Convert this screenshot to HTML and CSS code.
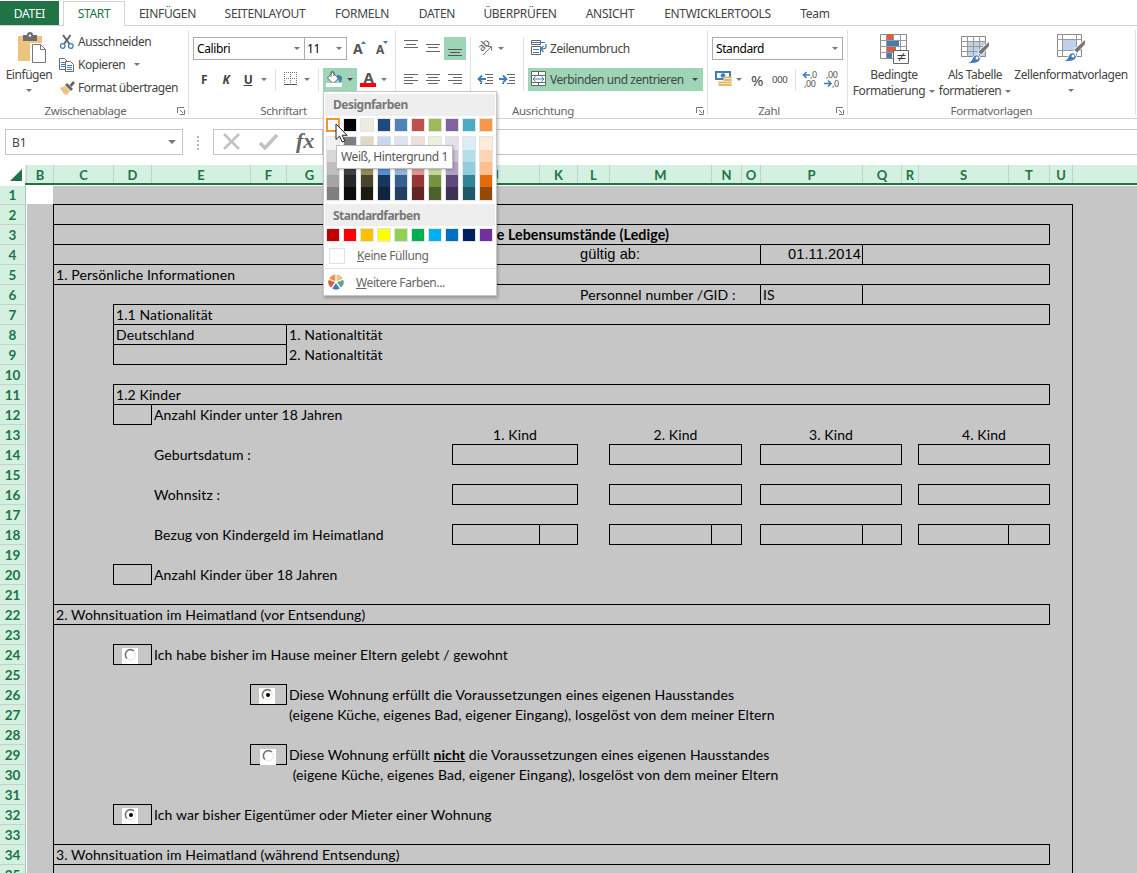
FILE: index.html
```html
<!DOCTYPE html>
<html lang="de">
	<head>
		<meta charset="UTF-8">
		<meta name="viewport" content="width=device-width, initial-scale=1.0">
		<title>Excel</title>
		<link rel="stylesheet" href="styles.css">
	</head>
	<body>
		<nav class="tabs">
			<a class="tab file">DATEI</a>
			<a class="tab active">START</a>
			<a class="tab t-einf">EINFÜGEN</a>
			<a class="tab t-layout">SEITENLAYOUT</a>
			<a class="tab t-formeln">FORMELN</a>
			<a class="tab t-daten">DATEN</a>
			<a class="tab t-pruef">ÜBERPRÜFEN</a>
			<a class="tab t-ansicht">ANSICHT</a>
			<a class="tab t-dev">ENTWICKLERTOOLS</a>
			<a class="tab t-team">Team</a>
		</nav>

		<div class="ribbon">
			<section class="group g-clip">
				<div class="tools clip">
					<div class="big paste">
						<svg width="30" height="32" viewBox="0 0 30 32">
							<path d="M1 3h24v25H1z" fill="#ecc47f"/>
							<path d="M6 2h4a3 3 0 0 1 6 0h4v6H6z" fill="#6d6d6d"/>
							<circle cx="13" cy="2.6" r="1.2" fill="#fff"/>
							<path d="M14.500 11.500h9l5 5v13h-14z" fill="#fff" stroke="#fff" stroke-width="3"/>
							<path d="M15.500 11.500h8l5 5v13h-13zM23.500 11.500v5h5" fill="#fff" stroke="#777"/>
						</svg>
						<span class="lbl">Einfügen</span>
						<i class="arr"></i>
					</div>
					<div class="small-list">
						<div class="small">
							<svg width="16" height="16" viewBox="0 0 16 16">
								<path d="M4 1l6.500 9M11.500 1L5 10" stroke="#666" stroke-width="2" fill="none"/>
								<circle cx="3.700" cy="12" r="2.300" fill="none" stroke="#3f7cb8" stroke-width="1.300"/>
								<circle cx="11.800" cy="12" r="2.300" fill="none" stroke="#3f7cb8" stroke-width="1.300"/>
							</svg>
							<span>Ausschneiden</span>
						</div>
						<div class="small s-copy">
							<svg width="16" height="16" viewBox="0 0 16 16">
								<path d="M.5 1.500h5l3 3v8h-8z" fill="#fff" stroke="#6a6a6a"/>
								<path d="M2 5.500h4M2 7.500h4M2 9.500h4" stroke="#3f7cb8"/>
								<path d="M6.500 4.500h5l3 3v7h-8z" fill="#fff" stroke="#6a6a6a"/>
								<path d="M8 8.500h5M8 10.500h5M8 12.500h5" stroke="#3f7cb8"/>
							</svg>
							<span>Kopieren</span>
							<i class="arr"></i>
						</div>
						<div class="small s-format">
							<svg width="16" height="16" viewBox="0 0 16 16">
								<path d="M1 8l5-2 5 5-3 4-3-1z" fill="#ecc47f"/>
								<path d="M6 5l2-2 6 6-2 2z" fill="#666"/>
								<path d="M10.500 5l3.500-4 2 2-3.500 4z" fill="#666"/>
							</svg>
							<span>Format übertragen</span>
						</div>
					</div>
				</div>
				<div class="caption">Zwischenablage<svg class="launch" width="8" height="8" viewBox="0 0 8 8"><path d="M.5 6V.5H7M3 3l3 3M7.500 3v4.500H3" fill="none" stroke="#777"/></svg></div>
			</section>

			<section class="group g-font">
				<div class="tools rows">
					<div class="row">
						<div class="combo c-font">Calibri<i class="arr"></i></div>
						<div class="combo c-size">11<i class="arr"></i></div>
						<svg class="grow" width="44" height="23" viewBox="0 0 44 23">
							<text class="bold-a" x="6" y="17" font-size="14">A</text>
							<path d="M14 7l2.500-3 2.500 3z" fill="#3f7cb8"/>
							<text class="bold-a" x="29" y="17" font-size="12">A</text>
							<path d="M36 4h5l-2.500 3z" fill="#3f7cb8"/>
						</svg>
					</div>
					<div class="row">
						<b class="fmt">F</b>
						<b class="fmt it">K</b>
						<b class="fmt un">U</b>
						<i class="arr slot"></i>
						<i class="sep"></i>
						<svg width="26" height="23" viewBox="0 0 26 23">
							<path d="M8.500 4v12M14.500 4v12M20.500 4v12M8 4.500h13M8 10.500h13" stroke="#777" stroke-dasharray="1 1"/>
							<path d="M8 16.500h13" stroke="#555"/>
						</svg>
						<i class="arr slot"></i>
						<i class="sep"></i>
						<div class="fill-btn">
							<svg width="22" height="23" viewBox="0 0 22 23">
								<path d="M9.500 4.500l6 6-5.500 5-5.500-5.500z" fill="#fff" stroke="#666"/>
								<path d="M8 9V4q1.500-2 3 0v4" fill="none" stroke="#666"/>
								<path d="M14 7q5 0 5 3t-2 5q-1-4-3-5z" fill="#3f7cb8"/>
								<path d="M3 15h16v4H3z" fill="#fff"/>
							</svg>
							<i class="arr dark"></i>
						</div>
						<svg width="22" height="23" viewBox="0 0 22 23">
							<text class="bold-a" x="6.500" y="15" font-size="15">A</text>
							<path d="M3 15h16v4H3z" fill="#f00"/>
						</svg>
						<i class="arr slot"></i>
					</div>
				</div>
				<div class="caption">Schriftart</div>
			</section>

			<section class="group g-align">
				<div class="tools split">
					<div class="rows">
						<div class="row">
							<svg width="22" height="23" viewBox="0 0 22 23"><path d="M4 3.500h14M6 7.500h10M4 10.500h14" stroke="#666"/></svg>
							<svg width="22" height="23" viewBox="0 0 22 23"><path d="M4 7.500h14M6 10.500h10M4 14.500h14" stroke="#666"/></svg>
							<svg class="on" width="22" height="23" viewBox="0 0 22 23"><path d="M4 12.500h14M6 15.500h10M4 18.500h14" stroke="#555"/></svg>
						</div>
						<div class="row">
							<svg width="22" height="23" viewBox="0 0 22 23"><path d="M4 6.500h14M4 9.500h9M4 12.500h14M4 15.500h9" stroke="#666"/></svg>
							<svg width="22" height="23" viewBox="0 0 22 23"><path d="M4 6.500h14M6 9.500h10M4 12.500h14M6 15.500h10" stroke="#666"/></svg>
							<svg width="22" height="23" viewBox="0 0 22 23"><path d="M4 6.500h14M9 9.500h9M4 12.500h14M9 15.500h9" stroke="#666"/></svg>
						</div>
					</div>
					<i class="vline"></i>
					<div class="rows orient">
						<div class="row">
							<svg width="22" height="23" viewBox="0 0 22 23">
								<text x="0" y="0" transform="translate(8,15) rotate(-45)" font-size="11" class="ab">ab</text>
								<path d="M9 18l8-8M13.500 9.500h4v4" fill="none" stroke="#777"/>
							</svg>
							<i class="arr slot"></i>
						</div>
						<div class="row">
							<svg width="44" height="23" viewBox="1 0 44 23">
								<path d="M12 6.500h8M14 9.500h6M14 12.500h6M12 15.500h8M7 15.500h2" stroke="#666"/>
								<path d="M13 11H6M9 7.500L5.500 11 9 14.500" fill="none" stroke="#3f7cb8" stroke-width="1.800"/>
								<path d="M34 6.500h8M36 9.500h6M36 12.500h6M34 15.500h8M29 15.500h2" stroke="#666"/>
								<path d="M26 11h7M30 7.500l3.500 3.500L30 14.500" fill="none" stroke="#3f7cb8" stroke-width="1.800"/>
							</svg>
						</div>
					</div>
					<i class="vline v2"></i>
					<div class="rows">
						<div class="row wrap-btn">
							<svg width="22" height="23" viewBox="0 0 22 23">
								<path d="M3.500 3.500h9v4h-9zM3.500 9.500h9v8h-9z" fill="#fff" stroke="#666"/>
								<path d="M3 5.500h14M5 12.500h6M5 15.500h6" stroke="#3f7cb8"/>
								<path d="M18 7v3q0 2-5 2M15.500 9L12.500 12l3 3" fill="none" stroke="#3f7cb8" stroke-width="1.300"/>
							</svg>
							<span>Zeilenumbruch</span>
						</div>
						<div class="row merge-btn">
							<svg width="22" height="23" viewBox="0 0 22 23">
								<path d="M3.500 3.500h14v14h-14z" fill="#fff" stroke="#666"/>
								<path d="M3 7.500h15M3 14.500h15M10.500 4v3M10.500 15v3" stroke="#666"/>
								<path d="M5 11h11M7.500 8.500L5 11l2.500 2.500M13.500 8.500L16 11l-2.500 2.500" fill="none" stroke="#3f7cb8"/>
							</svg>
							<span>Verbinden und zentrieren</span>
							<i class="arr dark"></i>
						</div>
					</div>
				</div>
				<div class="caption">Ausrichtung<svg class="launch" width="8" height="8" viewBox="0 0 8 8"><path d="M.5 6V.5H7M3 3l3 3M7.500 3v4.500H3" fill="none" stroke="#777"/></svg></div>
			</section>

			<section class="group g-num">
				<div class="tools rows">
					<div class="row"><div class="combo c-num">Standard<i class="arr"></i></div></div>
					<div class="row">
						<svg width="22" height="23" viewBox="0 0 22 23">
							<path d="M4 4h14v7H4z" fill="#fff" stroke="#3f7cb8" stroke-width="2"/>
							<circle cx="11" cy="7.500" r="2.300" fill="#3f7cb8"/>
							<ellipse cx="15.500" cy="11.500" rx="4" ry="3" fill="#fff"/>
							<path d="M12 9.500h7M12 12h7M12 14.500h7M7 14.500h6M7 17h6M12 17h7" stroke="#e9b866" stroke-width="1.800" stroke-linecap="round"/>
						</svg>
						<i class="arr slot"></i>
						<span class="pct">%</span>
						<span class="ths">000</span>
						<i class="sep"></i>
						<svg width="48" height="23" viewBox="0 0 48 23">
							<text class="dec" x="14" y="10">,0</text>
							<text class="dec" x="8" y="19">,00</text>
							<path d="M14 7H8M10.500 4L7.500 7l3 3" fill="none" stroke="#3f7cb8" stroke-width="1.600"/>
							<text class="dec" x="30" y="10">,00</text>
							<text class="dec" x="36" y="19">,0</text>
							<path d="M28 15.500h7M32 12.500l3 3-3 3" fill="none" stroke="#3f7cb8" stroke-width="1.600"/>
						</svg>
					</div>
				</div>
				<div class="caption">Zahl<svg class="launch" width="8" height="8" viewBox="0 0 8 8"><path d="M.5 6V.5H7M3 3l3 3M7.500 3v4.500H3" fill="none" stroke="#777"/></svg></div>
			</section>

			<section class="group g-style">
				<div class="tools styles">
					<div class="big b-cond">
						<svg width="30" height="32" viewBox="0 0 30 32">
							<path d="M1.500 1.500h26v24h-26z" fill="#fff" stroke="#888"/>
							<path d="M8 1h6v6H8zM8 13h9v6H8z" fill="#d9603f"/>
							<path d="M8 7h12v6H8zM8 19h5v6H8z" fill="#3f7cb8"/>
							<path d="M1 7.500h27M1 13.500h27M1 19.500h27M7.500 1v25M14.500 1v6M21.500 1v25" stroke="#999"/>
							<path d="M14.500 17.500h15v13h-15z" fill="#fff" stroke="#666"/>
							<path d="M18.500 22.500h8M18.500 25.500h8M25 20l-5 8" stroke="#333"/>
						</svg>
						<span class="lbl">Bedingte</span>
						<span class="lbl">Formatierung<i class="arr"></i></span>
					</div>
					<div class="big b-table">
						<svg width="30" height="32" viewBox="0 0 30 32">
							<path d="M1.500 3.500h24v20h-24z" fill="#fff" stroke="#888"/>
							<path d="M7 9h18v14H7z" fill="#bdd3ec"/>
							<path d="M1 8.500h25M1 13.500h25M1 18.500h25M7.500 3v21M13.500 3v21M19.500 3v21" stroke="#999"/>
							<path d="M29.500 8v5l-8 9-4-3z" fill="#777" stroke="#fff"/>
							<path d="M7 30q5-1 6-6 3-4 6-1 3 3 0 5.500-4 3-12 1.500z" fill="#3f7cb8" stroke="#fff"/>
							<circle cx="17" cy="25" r="1.500" fill="#fff"/>
						</svg>
						<span class="lbl">Als Tabelle</span>
						<span class="lbl">formatieren<i class="arr"></i></span>
					</div>
					<div class="big b-cell">
						<svg width="30" height="32" viewBox="0 0 30 32">
							<path d="M1.500 1.500h24v22h-24z" fill="#fff" stroke="#888"/>
							<path d="M6 7h15v11H6z" fill="#bdd3ec"/>
							<path d="M1 6.500h25M1 17.500h25M6.500 1v23M20.500 1v23" stroke="#999"/>
							<path d="M29.500 6v5l-8 9-4-3z" fill="#777" stroke="#fff"/>
							<path d="M7 28q5-1 6-6 3-4 6-1 3 3 0 5.500-4 3-12 1.500z" fill="#3f7cb8" stroke="#fff"/>
							<circle cx="17" cy="23" r="1.500" fill="#fff"/>
						</svg>
						<span class="lbl">Zellenformatvorlagen</span>
						<i class="arr"></i>
					</div>
				</div>
				<div class="caption">Formatvorlagen</div>
			</section>
		</div>

		<div class="formula-bar">
			<div class="name-box">B1<i class="arr"></i></div>
			<div class="dots"><i></i><i></i><i></i><i></i></div>
			<div class="fx-box">
				<svg width="108" height="24" viewBox="0 0 108 24">
					<path d="M10 4l15 15M25 4L10 19" stroke="#c2c2c2" stroke-width="2.600" fill="none"/>
					<path d="M46 13l5 5L63 5" stroke="#c2c2c2" stroke-width="3.500" fill="none"/>
					<text class="fx" x="82" y="18">fx</text>
				</svg>
			</div>
			<div class="formula"></div>
		</div>

		<div class="sheet">
			<div class="col-heads" id="colHeads"></div>
			<div class="sheet-body">
				<div class="row-heads" id="rowHeads"></div>
				<div class="cells" id="cells"></div>
			</div>
		</div>

		<div class="color-menu">
			<div class="menu-title">Designfarben</div>
			<div class="swatches" id="themeColors"></div>
			<div class="swatches shades" id="shades"></div>
			<div class="menu-title second">Standardfarben</div>
			<div class="swatches std" id="stdColors"></div>
			<div class="menu-item"><i class="no-fill"></i><span><u>K</u>eine Füllung</span></div>
			<div class="menu-item more">
				<svg width="16" height="16" viewBox="-8 -8 16 16">
					<path d="M0 0L-6.800-3A7.500 7.500 0 0 1 0-7.500z" fill="#e8954e"/>
					<path d="M0 0V-7.500A7.500 7.500 0 0 1 7-3z" fill="#ecc47f"/>
					<path d="M0 0L7-3A7.500 7.500 0 0 1 4.500 6z" fill="#62a58c"/>
					<path d="M0 0L4.500 6A7.500 7.500 0 0 1-4.500 6z" fill="#3f7cb8"/>
					<path d="M0 0L-4.500 6A7.500 7.500 0 0 1-7-3z" fill="#d9603f"/>
					<path d="M0 0V-8M0 0L8-3M0 0L5 7M0 0L-5 7M0 0L-8-3" stroke="#fff" stroke-width="1.300"/>
				</svg>
				<span><u>W</u>eitere Farben...</span>
			</div>
		</div>
		<div class="tooltip">Weiß, Hintergrund 1</div>
		<svg class="cursor" width="14" height="21" viewBox="0 0 14 21">
			<path d="M1 1v15.500l3.600-3.400 2.600 6 2.600-1.200-2.600-5.600h4.900z" fill="#fff" stroke="#222"/>
		</svg>

		<script src="script.js"></script>
	</body>
</html>
```
FILE: styles.css
```css
* {
    box-sizing: border-box;
}

body {
    margin: 0;
    width: 1137px;
    height: 873px;
    overflow: hidden;
    position: relative;
    background-color: #ffffff;
    color: #444444;
    font-family: "Noto Sans", "Open Sans", sans-serif;
    font-size: 12px;
}

svg {
    display: block;
    flex: none;
    overflow: visible;
}

/* small drop down triangle */
.arr {
    display: inline-block;
    flex: none;
    width: 0;
    height: 0;
    border: 3px solid transparent;
    border-top-color: #777777;
    border-bottom: 0;
}

.arr.slot {
    margin: 0 2px;
}

.arr.dark {
    border-top-color: #444444;
}

/* tabs */
.tabs {
    display: flex;
    height: 26px;
    padding-top: 1px;
    border-bottom: 1px solid #d4d4d4;
}

.tab {
    height: 25px;
    line-height: 25px;
    text-align: center;
    white-space: nowrap;
    letter-spacing: -0.3px;
}

.tab.file {
    width: 59px;
    height: 24px;
    margin-right: 4px;
    background-color: #217346;
    color: #ffffff;
}

.tab.active {
    width: 62px;
    border: 1px solid #d4d4d4;
    border-bottom: 0;
    background-color: #ffffff;
    color: #217346;
    line-height: 24px;
}

.t-einf { width: 85px; }
.t-layout { width: 110px; }
.t-formeln { width: 84px; }
.t-daten { width: 66px; }
.t-pruef { width: 100px; }
.t-ansicht { width: 80px; }
.t-dev { width: 135px; }
.t-team { width: 60px; }

/* ribbon */
.ribbon {
    display: flex;
    height: 93px;
    border-bottom: 1px solid #d4d4d4;
    letter-spacing: -0.45px;
}

.group {
    display: flex;
    flex-direction: column;
    margin: 4px 0 3px;
    border-right: 1px solid #e1e1e1;
}

.g-clip { width: 189px; }
.g-font { width: 207px; }
.g-align { width: 312px; }
.g-num { width: 140px; }
.g-style { width: 288px; }

.tools {
    height: 73px;
}

.caption {
    position: relative;
    height: 12px;
    line-height: 15px;
    padding-right: 17px;
    text-align: center;
    color: #666666;
    font-size: 11.5px;
    letter-spacing: -0.35px;
}

.g-style .caption {
    padding-right: 0;
}

.launch {
    position: absolute;
    right: 3px;
    top: 4px;
}

.rows {
    padding-top: 7px;
}

.row {
    display: flex;
    align-items: center;
    height: 23px;
    margin-bottom: 8px;
}

.clip,
.split,
.styles {
    display: flex;
}

.big {
    display: flex;
    flex-direction: column;
    align-items: center;
    padding-top: 3px;
}

.big .lbl {
    height: 16px;
    line-height: 16px;
    white-space: nowrap;
}

.big svg {
    margin-bottom: 2px;
}

.big .lbl .arr {
    margin-left: 4px;
    vertical-align: 2px;
}

.big > .arr {
    margin-top: 6px;
}

.paste {
    width: 58px;
}

.paste svg {
    margin-left: 5px;
}

.small {
    display: flex;
    align-items: center;
    height: 23px;
    white-space: nowrap;
}

.small span {
    margin-top: -1px;
}

.small svg {
    margin: 0 3px 0 1px;
}

.s-copy .arr {
    margin-left: 9px;
}

/* font group */
.g-font .tools,
.g-num .tools {
    padding-left: 4px;
}

.combo {
    display: flex;
    align-items: center;
    justify-content: space-between;
    height: 23px;
    padding: 0 4px 0 3px;
    border: 1px solid #ababab;
    background-color: #ffffff;
    color: #000000;
    letter-spacing: -0.4px;
}

.c-font { width: 112px; }
.c-size { width: 43px; margin-left: -1px; padding-left: 2px; }
.c-num { width: 131px; }

.bold-a,
.dec,
.ab {
    font-family: "Noto Sans", sans-serif;
    fill: #555555;
}

.bold-a {
    font-weight: bold;
}

.dec {
    font-size: 9px;
    letter-spacing: -0.4px;
}

.fmt {
    width: 22px;
    text-align: center;
    font-size: 12px;
}

.it { font-style: italic; }
.un { text-decoration: underline; }

.sep {
    width: 1px;
    height: 22px;
    margin-left: 6px;
    background-color: #e1e1e1;
}

.fill-btn {
    display: flex;
    align-items: center;
    width: 34px;
    height: 23px;
    margin: 0 0 0 4px;
    background-color: #9fd5b7;
}

.fill-btn .arr {
    margin-left: 2px;
}

/* alignment group */
.g-align .tools {
    padding-left: 4px;
}

.on {
    background-color: #9fd5b7;
}

.vline {
    width: 1px;
    height: 54px;
    margin: 7px 3px 0 4px;
    background-color: #e1e1e1;
}

.vline.v2 {
    margin: 7px 4px 0 5px;
}

.orient {
    width: 44px;
}

.wrap-btn,
.merge-btn {
    width: 175px;
    white-space: nowrap;
}

.merge-btn {
    justify-content: space-between;
    padding-right: 5px;
    background-color: #9fd5b7;
}

.merge-btn span {
    flex: 1;
}

/* number group */
.pct {
    width: 28px;
    padding-right: 2px;
    text-align: center;
    font-size: 15px;
}

.ths {
    width: 16px;
    font-size: 9.5px;
    letter-spacing: -0.3px;
}

.g-num .sep {
    margin-left: 7px;
}

/* styles group */
.b-cond { width: 92px; }
.b-table { width: 70px; }
.b-cell { width: 122px; }

/* formula bar */
.formula-bar {
    display: flex;
    height: 46px;
    padding: 10px 0 0 5px;
}

.name-box {
    display: flex;
    align-items: center;
    justify-content: space-between;
    width: 178px;
    height: 26px;
    padding: 0 6px;
    border: 1px solid #c6c6c6;
}

.name-box .arr {
    border-width: 4px 4px 0;
}

.dots {
    display: flex;
    flex-direction: column;
    gap: 2px;
    width: 30px;
    padding: 7px 0 0 14px;
}

.dots i {
    width: 2px;
    height: 2px;
    background-color: #b4b4b4;
}

.fx-box {
    width: 110px;
    height: 26px;
    border: 1px solid #c6c6c6;
}

.fx {
    font: italic bold 22px "Liberation Serif", serif;
    fill: #666666;
}

.formula {
    flex: 1;
    height: 26px;
    border: 1px solid #c6c6c6;
    border-width: 1px 0;
}

/* sheet */
.sheet {
    height: 708px;
    overflow: hidden;
    font-family: Lato, "Open Sans", sans-serif;
}

.col-heads {
    display: grid;
    height: 21px;
    padding-left: 26px;
    background-color: #d3f0e0;
    border-bottom: 1px solid #ffffff;
    box-shadow: inset 0 -2px #217346;
    position: relative;
}

/* select-all corner */
.col-heads::before {
    content: "";
    position: absolute;
    left: 0;
    top: 0;
    width: 25px;
    height: 20px;
    background-color: #ffffff;
}

.col-heads::after {
    content: "";
    position: absolute;
    left: 10px;
    top: 4px;
    border: 6px solid transparent;
    border-right-color: #217346;
    border-bottom-color: #217346;
}

.col-heads div {
    height: 18px;
    border-left: 1px solid #c9cfcb;
    text-align: center;
    font-weight: bold;
    font-size: 13px;
    line-height: 20px;
    color: #217346;
}

.sheet-body {
    display: flex;
}

.row-heads {
    width: 27px;
    padding-right: 1px;
    background-color: #d3f0e0;
    border-right: 1px solid #ffffff;
    box-shadow: inset -1px 0 #a9c9b8;
}

.row-heads div {
    height: 20px;
    border-bottom: 1px solid #c9cfcb;
    text-align: center;
    font-weight: bold;
    font-size: 13.5px;
    line-height: 21px;
    color: #217346;
}

.row-heads div:first-child {
    height: 19px;
    line-height: 19px;
}

.cells {
    display: grid;
    flex: 1;
    background-color: #c6c6c6;
    color: #000000;
    font-size: 14px;
    letter-spacing: 0.1px;
}

.cell {
    margin: 0 -1px -1px 0;
    padding: 0 2px;
    border: 1px solid transparent;
    line-height: 19px;
    white-space: pre;
    min-width: 0;
}

.box {
    border-color: #000000;
}

.current {
    margin: 0;
    background-color: #ffffff;
}

.arial { font-family: "Liberation Sans", Arial, sans-serif; font-size: 14.6px; }
.center { text-align: center; }
.right { text-align: right; padding-right: 1px; }
.title { text-align: right; font-weight: bold; font-size: 14.2px; padding-right: 42px; }

.radio {
    width: 16px;
    height: 16px;
    margin: 3px 0 0 6px;
    background-color: #ffffff;
}

.radio.low {
    margin: 4px 0 0 7px;
}

/* fill colour menu */
.color-menu {
    position: absolute;
    left: 323px;
    top: 91px;
    width: 174px;
    height: 205px;
    padding: 2px 1px;
    border: 1px solid #c6c6c6;
    background-color: #ffffff;
    box-shadow: 1px 2px 3px rgba(0, 0, 0, 0.25);
    color: #666666;
    letter-spacing: -0.4px;
}

.menu-title {
    height: 22px;
    padding-left: 8px;
    background-color: #eeeeee;
    color: #777777;
    font-weight: bold;
    line-height: 22px;
    letter-spacing: -0.5px;
}

.menu-title.second {
    line-height: 24px;
}

.swatches {
    display: flex;
    gap: 3px;
    padding: 2px 0 0 1px;
}

.swatch {
    width: 14px;
    height: 14px;
    border: 1px solid #e2e4e7;
}

.swatch.picked {
    border: 2px solid #f29436;
}

.shades {
    height: 72px;
    padding-top: 4px;
}

.shade-col {
    width: 14px;
    height: 65px;
    border: 1px solid #e2e4e7;
}

.shade-col div {
    height: 12.6px;
}

.std {
    height: 17px;
}

.menu-item {
    display: flex;
    align-items: center;
    height: 25px;
}

.menu-item span {
    margin-left: 12px;
}

.no-fill {
    width: 16px;
    height: 16px;
    margin-left: 4px;
    border: 1px solid #e1e1e1;
}

.more {
    border-top: 1px solid #e1e1e1;
    height: 27px;
}

.more svg {
    margin-left: 3px;
}

.tooltip {
    position: absolute;
    left: 336px;
    top: 145px;
    width: 117px;
    height: 24px;
    padding-left: 4px;
    border: 1px solid #bebebe;
    background-color: #ffffff;
    box-shadow: 1px 1px 2px rgba(0, 0, 0, 0.2);
    color: #575757;
    line-height: 22px;
    letter-spacing: -0.4px;
    white-space: nowrap;
}

.cursor {
    position: absolute;
    left: 335px;
    top: 123px;
}
```
FILE: script.js
```javascript
// column name -> width in px
const columns = {
    B: 26, C: 60, D: 38, E: 99, F: 36, G: 46, H: 60, I: 60, J: 87, K: 38, L: 32,
    M: 102, N: 30, O: 19, P: 102, Q: 39, R: 17, S: 90, T: 41, U: 23, V: 65
};
const names = Object.keys(columns);
const widths = names.map(n => columns[n] + 'px');

// the first header starts one pixel early, over the row header border
const colHeads = document.getElementById('colHeads');
colHeads.style.gridTemplateColumns = ['27px'].concat(widths.slice(1)).join(' ');
names.forEach(n => {
    const div = document.createElement('div');
    div.textContent = n === 'V' ? '' : n;
    colHeads.appendChild(div);
});

const rowHeads = document.getElementById('rowHeads');
for (let i = 1; i <= 35; i++) {
    const div = document.createElement('div');
    div.textContent = i;
    rowHeads.appendChild(div);
}

const radio = (on, cls) => `<svg class="radio ${cls || ''}" viewBox="0 0 16 16">
    <path d="M5 10.500A5 5 0 0 1 12 3" fill="none" stroke="#77756b" stroke-width="1.600"/>
    <path d="M12.500 4A5 5 0 0 1 5.500 11" fill="none" stroke="#e6e3d8"/>
    ${on ? '<circle cx="9" cy="7" r="2" fill="#000"/>' : ''}</svg>`;

// [row, last row, first column, last column, classes, content]
const data = [
    [1, 1, 'B', 'B', 'current', ''],
    [2, 36, 'C', 'U', 'box', ''],
    [3, 3, 'C', 'T', 'box', ''],
    [3, 3, 'H', 'M', 'title', 'Persönliche Lebensumstände (Ledige)'],
    [4, 4, 'C', 'O', 'box', ''],
    [4, 4, 'L', 'O', 'arial', 'gültig ab:'],
    [4, 4, 'P', 'P', 'box right arial', '01.11.2014'],
    [5, 5, 'C', 'T', 'box', '1. Persönliche Informationen'],
    [6, 6, 'L', 'O', '', 'Personnel number /GID :'],
    [6, 6, 'P', 'P', 'box', 'IS'],
    [7, 7, 'D', 'T', 'box', '1.1 Nationalität'],
    [8, 8, 'D', 'F', 'box', 'Deutschland'],
    [8, 8, 'G', 'J', '', '1. Nationaltität'],
    [9, 9, 'D', 'F', 'box', ''],
    [9, 9, 'G', 'J', '', '2. Nationaltität'],
    [11, 11, 'D', 'T', 'box', '1.2 Kinder'],
    [12, 12, 'D', 'D', 'box', ''],
    [12, 12, 'E', 'I', '', 'Anzahl Kinder unter 18 Jahren'],
    [14, 14, 'E', 'I', '', 'Geburtsdatum :'],
    [16, 16, 'E', 'I', '', 'Wohnsitz :'],
    [18, 18, 'E', 'I', '', 'Bezug von Kindergeld im Heimatland'],
    [20, 20, 'D', 'D', 'box', ''],
    [20, 20, 'E', 'I', '', 'Anzahl Kinder über 18 Jahren'],
    [22, 22, 'C', 'T', 'box', '2. Wohnsituation im Heimatland (vor Entsendung)'],
    [24, 24, 'D', 'D', 'box', radio(false)],
    [24, 24, 'E', 'M', '', 'Ich habe bisher im Hause meiner Eltern gelebt / gewohnt'],
    [26, 26, 'F', 'F', 'box', radio(true)],
    [26, 26, 'G', 'P', '', 'Diese Wohnung erfüllt die Voraussetzungen eines eigenen Hausstandes'],
    [27, 27, 'G', 'P', '', '(eigene Küche, eigenes Bad, eigener Eingang), losgelöst von dem meiner Eltern'],
    [29, 29, 'F', 'F', 'box', radio(false, 'low')],
    [29, 29, 'G', 'P', '', 'Diese Wohnung erfüllt <b><u>nicht</u></b> die Voraussetzungen eines eigenen Hausstandes'],
    [30, 30, 'G', 'P', '', ' (eigene Küche, eigenes Bad, eigener Eingang), losgelöst von dem meiner Eltern'],
    [32, 32, 'D', 'D', 'box', radio(true)],
    [32, 32, 'E', 'M', '', 'Ich war bisher Eigentümer oder Mieter einer Wohnung'],
    [34, 34, 'C', 'T', 'box', '3. Wohnsituation im Heimatland (während Entsendung)']
];

// one block of boxes per child
[['J', 'K'], ['M', 'N'], ['P', 'Q'], ['S', 'T']].forEach(([a, b], i) => {
    data.push([13, 13, a, b, 'center', (i + 1) + '. Kind']);
    data.push([14, 14, a, b, 'box', '']);
    data.push([16, 16, a, b, 'box', '']);
    data.push([18, 18, a, a, 'box', '']);
    data.push([18, 18, b, b, 'box', '']);
});

const cells = document.getElementById('cells');
cells.style.gridTemplateColumns = widths.join(' ');
cells.style.gridTemplateRows = '18px repeat(35, 20px)';
data.forEach(([r1, r2, c1, c2, cls, html]) => {
    const div = document.createElement('div');
    div.className = 'cell ' + cls;
    div.style.gridArea = `${r1} / ${names.indexOf(c1) + 1} / ${r2 + 1} / ${names.indexOf(c2) + 2}`;
    div.innerHTML = html;
    cells.appendChild(div);
});

// colour palette
const theme = ['#ffffff', '#000000', '#eeece1', '#1f497d', '#4f81bd', '#c0504d', '#9bbb59', '#8064a2', '#4bacc6', '#f79646'];
const shades = [
    ['#f2f2f2', '#d8d8d8', '#bfbfbf', '#a5a5a5', '#7f7f7f'],
    ['#7f7f7f', '#595959', '#3f3f3f', '#262626', '#0c0c0c'],
    ['#ddd9c3', '#c4bd97', '#938953', '#494429', '#1d1b10'],
    ['#c6d9f0', '#8db3e2', '#548dd4', '#17365d', '#0f243e'],
    ['#dbe5f1', '#b8cce4', '#95b3d7', '#366092', '#244061'],
    ['#f2dcdb', '#e5b9b7', '#d99694', '#953734', '#632423'],
    ['#ebf1dd', '#d7e3bc', '#c3d69b', '#76923c', '#4f6128'],
    ['#e5e0ec', '#ccc1d9', '#b2a2c7', '#5f497a', '#3f3151'],
    ['#dbeef3', '#b7dde8', '#92cddc', '#31859b', '#205867'],
    ['#fdeada', '#fbd5b5', '#fac08f', '#e36c09', '#974806']
];
const standard = ['#c00000', '#ff0000', '#ffc000', '#ffff00', '#92d050', '#00b050', '#00b0f0', '#0070c0', '#002060', '#7030a0'];

const swatch = (c, picked) => `<div class="swatch${picked ? ' picked' : ''}" style="background-color: ${c}"></div>`;
document.getElementById('themeColors').innerHTML = theme.map((c, i) => swatch(c, i === 0)).join('');
document.getElementById('stdColors').innerHTML = standard.map(c => swatch(c)).join('');
document.getElementById('shades').innerHTML = shades.map(col =>
    '<div class="shade-col">' + col.map(c => `<div style="background-color: ${c}"></div>`).join('') + '</div>'
).join('');
```
